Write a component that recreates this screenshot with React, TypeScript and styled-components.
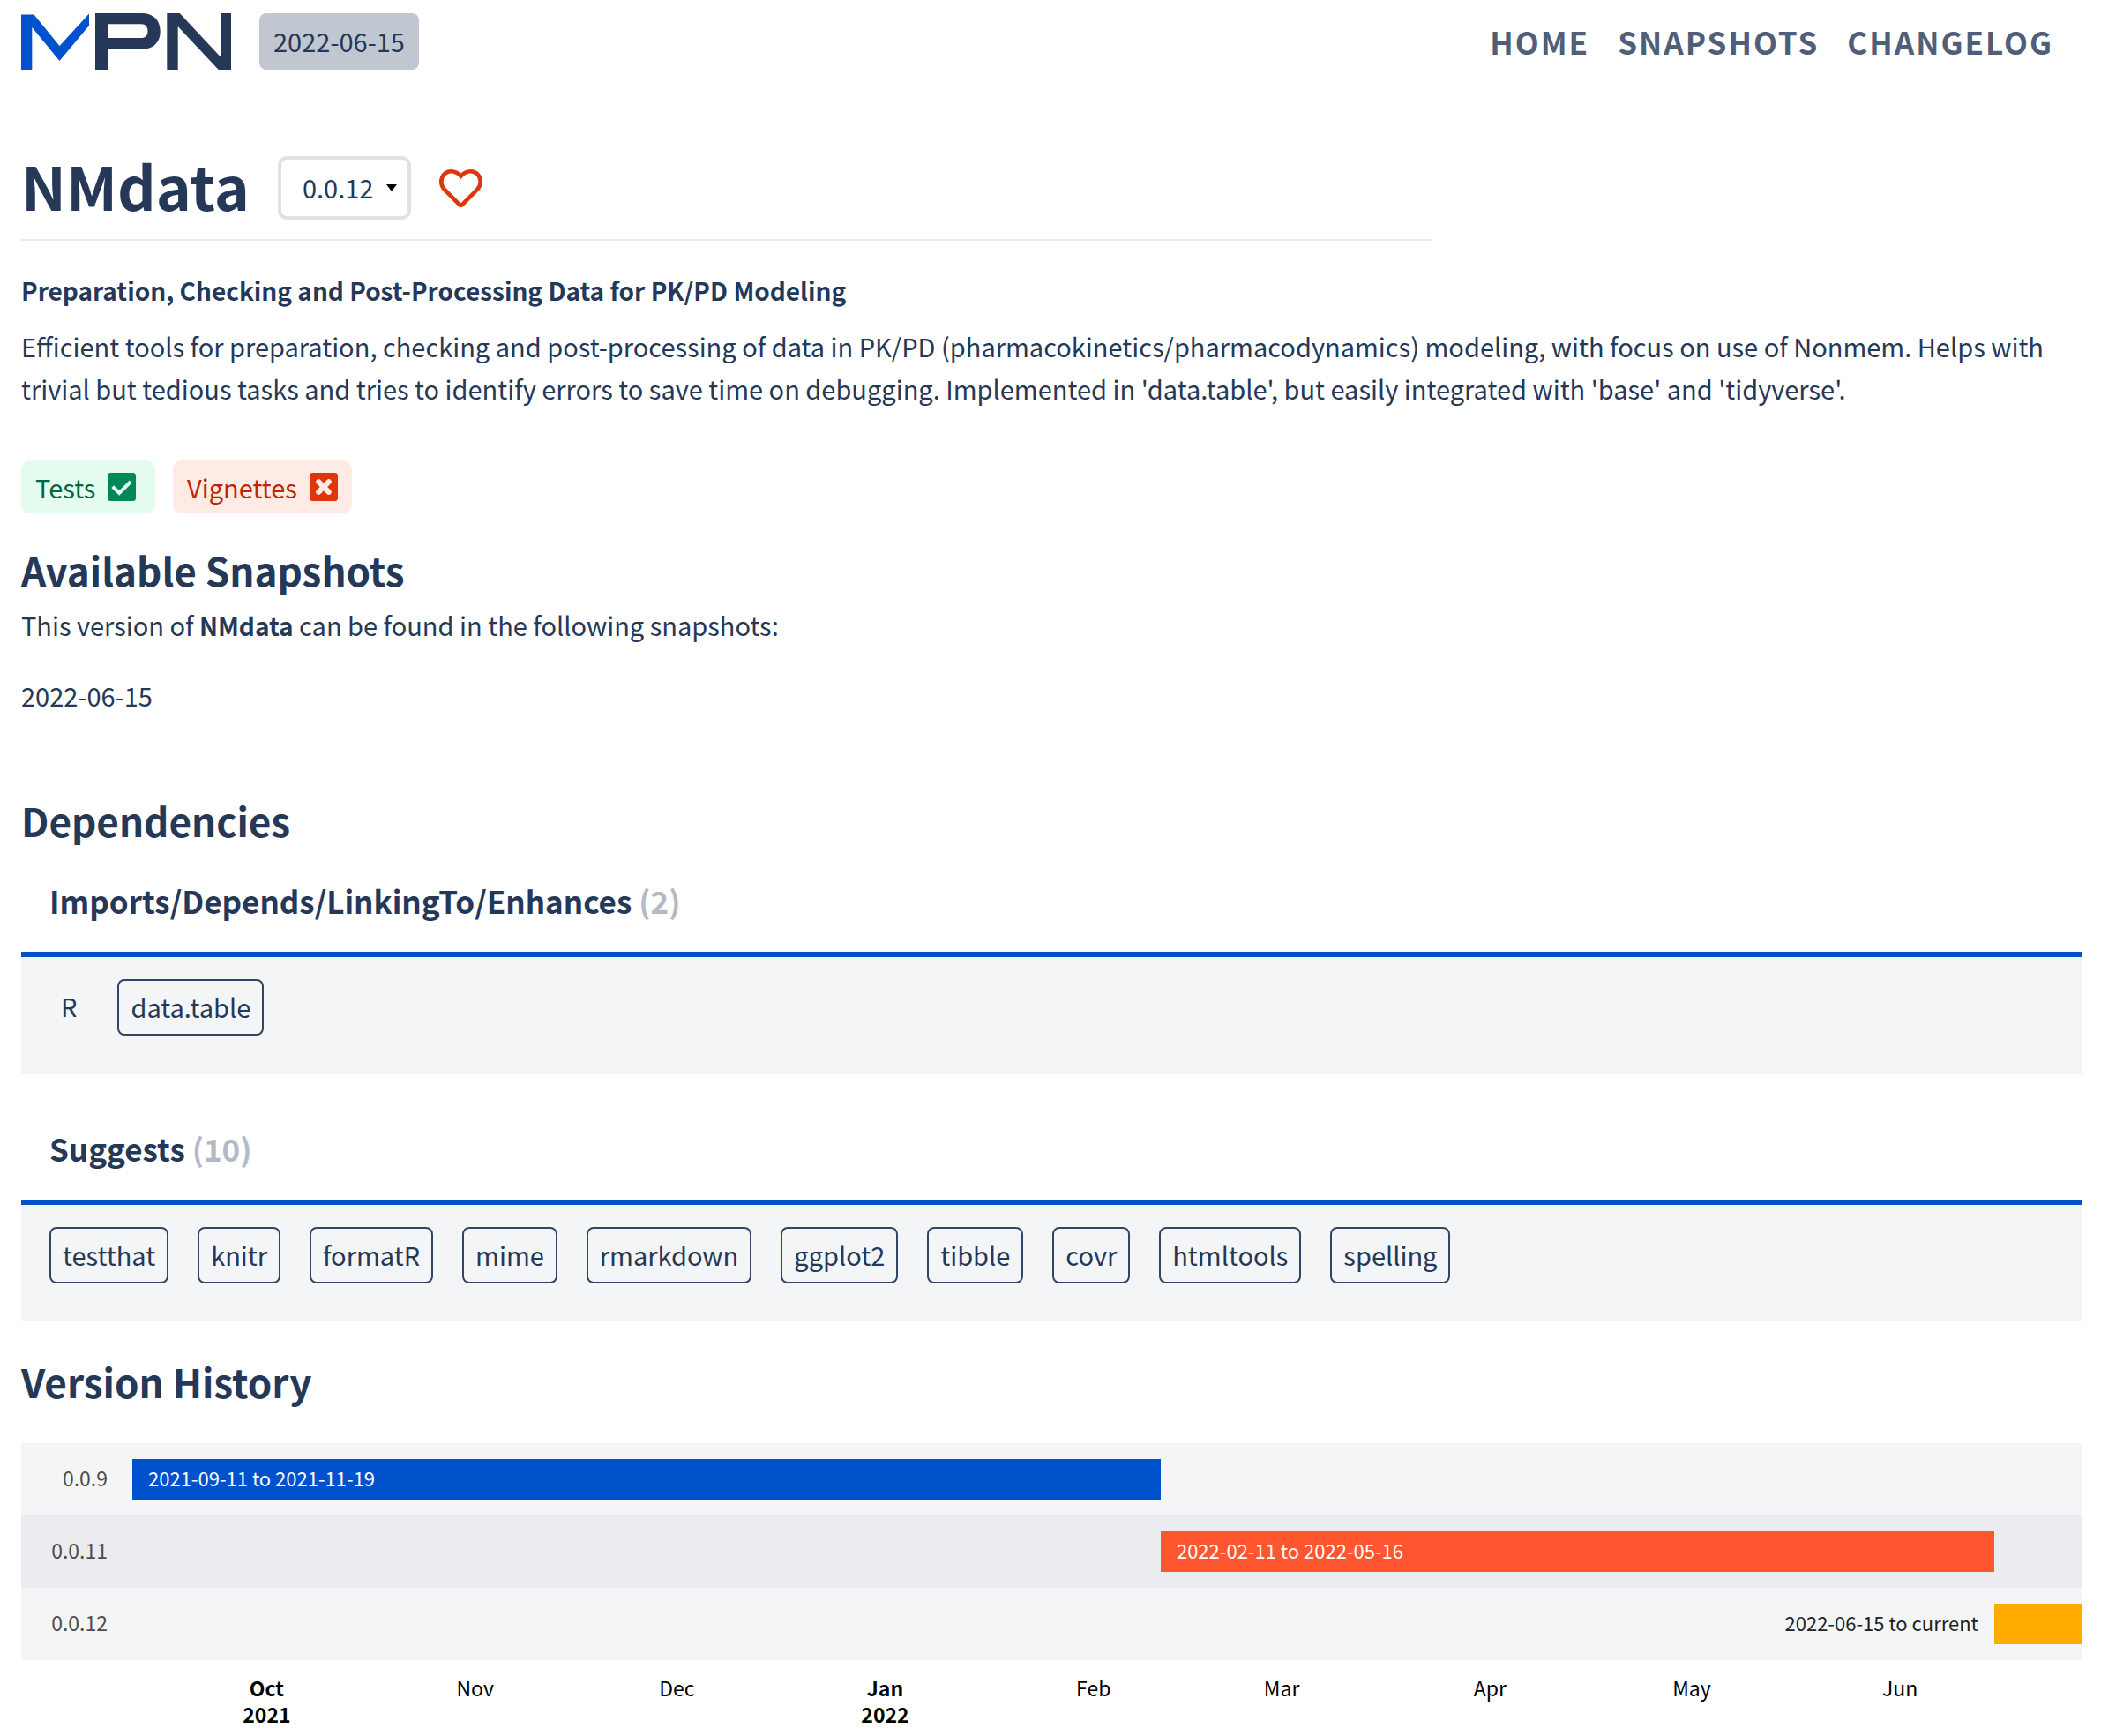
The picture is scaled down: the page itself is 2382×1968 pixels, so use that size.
import React from "react";
import styled, { createGlobalStyle } from "styled-components";

const color = {
  ink: "#253858",
  slate: "#505f79",
  blue: "#0052cc",
  panel: "#f4f5f7",
  band: "#ebecf0",
  rule: "#ebecf0",
  muted: "#b3bac5",
};

const GlobalStyle = createGlobalStyle`
  *, *::before, *::after { box-sizing: border-box; }
  body {
    margin: 0;
    background: #ffffff;
    color: ${color.ink};
    font-family: "Noto Sans CJK SC", "Noto Sans", sans-serif;
    font-size: 29px;
    line-height: 48px;
  }
  h1, h2, h3, p, ul, ol, figure { margin: 0; padding: 0; }
  ul, ol { list-style: none; }
`;

const Page = styled.div`
  padding: 15px 22px 0 24px;
`;

const Header = styled.header`
  display: flex;
  align-items: center;
  gap: 32px;
`;

const LogoLink = styled.a`
  display: flex;
`;

const SnapshotBadge = styled.span`
  padding: 7px 16px 9px;
  border-radius: 8px;
  background: #c1c7d0;
`;

const Nav = styled.nav`
  display: flex;
  gap: 32px;
  margin-left: auto;
  padding-right: 32px;
`;

const NavLink = styled.a`
  color: ${color.slate};
  font-size: 35px;
  font-weight: 700;
  letter-spacing: 2px;
  text-decoration: none;
  text-transform: uppercase;
`;

const TitleBar = styled.div`
  display: flex;
  align-items: center;
  gap: 32px;
  max-width: 1600px;
  margin-top: 80px;
  padding-bottom: 4px;
  border-bottom: 2px solid ${color.rule};
`;

const Title = styled.h1`
  padding-bottom: 6px;
  font-size: 68px;
  font-weight: 700;
  line-height: 102px;
`;

const VersionPicker = styled.label`
  display: grid;
  align-items: center;
`;

const VersionSelect = styled.select`
  grid-area: 1 / 1;
  height: 72px;
  padding: 0 38px 2px 24px;
  appearance: none;
  border: 4px solid #dfe1e6;
  border-radius: 10px;
  background: transparent;
  color: inherit;
  font: inherit;
`;

const Caret = styled.svg`
  grid-area: 1 / 1;
  justify-self: end;
  margin-right: 16px;
  pointer-events: none;
`;

const IconButton = styled.button`
  display: flex;
  padding: 0;
  border: 0;
  background: none;
  cursor: pointer;
`;

const Summary = styled.p`
  margin-top: 32px;
  font-size: 28px;
  font-weight: 700;
`;

const Description = styled.p`
  margin-top: 15px;
`;

const StatusList = styled.ul`
  display: flex;
  gap: 20px;
  margin-top: 58px;
`;

const Status = styled.li<{ $ok: boolean }>`
  display: flex;
  align-items: center;
  gap: 14px;
  min-width: 152px;
  padding: 6px 16px;
  border-radius: 10px;
  background: ${(p) => (p.$ok ? "#e3fcef" : "#ffebe6")};
  color: ${(p) => (p.$ok ? "#006644" : "#bf2600")};
`;

const Heading = styled.h2<{ $gap: number }>`
  margin-top: ${(p) => p.$gap}px;
  font-size: 44px;
  font-weight: 700;
  line-height: 60px;
`;

const Paragraph = styled.p<{ $gap: number }>`
  margin-top: ${(p) => p.$gap}px;
`;

const Strong = styled.strong`
  font-size: 28px;
  font-weight: 700;
  line-height: 28px;
`;

const DependencyGroup = styled.section<{ $gap: number }>`
  margin-top: ${(p) => p.$gap}px;
`;

const GroupTitle = styled.h3`
  padding: 0 32px 30px;
  font-size: 35px;
  font-weight: 700;
  line-height: 56px;
`;

const Count = styled.span`
  color: ${color.muted};
`;

const TagPanel = styled.ul`
  display: flex;
  flex-wrap: wrap;
  gap: 33px;
  padding: 25px 32px 43px;
  border-top: 6px solid ${color.blue};
  background: ${color.panel};
`;

const TagItem = styled.li`
  display: flex;
`;

const Tag = styled.a`
  padding: 5px 13px 7px;
  border: 2px solid #344563;
  border-radius: 8px;
  color: ${color.ink};
  text-decoration: none;
`;

const PlainTag = styled.span`
  padding: 6px 13px;
`;

const Chart = styled.figure`
  margin-top: 40px;
  font-size: 22px;
  line-height: 30px;
`;

const ChartRow = styled.li<{ $alt: boolean }>`
  display: flex;
  align-items: center;
  height: 82px;
  background: ${(p) => (p.$alt ? color.band : color.panel)};
`;

const RowLabel = styled.span`
  flex: none;
  width: 126px;
  padding: 0 28px 4px 0;
  color: #4d4d4d;
  font-size: 23px;
  text-align: right;
`;

const Track = styled.div`
  display: flex;
  flex: 1;
  align-items: center;
  min-width: 0;
`;

const Lead = styled.div`
  min-width: 0;
  padding: 0 18px 4px 0;
  color: #222222;
  text-align: right;
  white-space: nowrap;
`;

const Spacer = styled.div`
  min-width: 0;
`;

const Bar = styled.div<{ $fill: string }>`
  min-width: 0;
  height: 46px;
  background: ${(p) => p.$fill};
  color: #ffffff;
  line-height: 42px;
  white-space: nowrap;
`;

const BarText = styled.span`
  padding-left: 18px;
`;

const Axis = styled.div`
  display: flex;
  margin-left: 126px;
  padding: 16px 0 8px;
  color: #000000;
  font-size: 23px;
`;

const Tick = styled.div<{ $major: boolean }>`
  display: flex;
  justify-content: center;
  width: 0;
  font-weight: ${(p) => (p.$major ? 700 : 400)};
  text-align: center;
  white-space: nowrap;
`;

const Logo = () => (
  <svg width="238" height="64" viewBox="0 0 238 64" role="img" aria-label="MPN">
    <path fill="#0052cc" d="M0 1.5H14.5L43.5 37 77 .5V14L43.5 54 12.3 16V64H0z" />
    <path
      fill="#253858"
      fillRule="evenodd"
      d="M84 0H137C150 0 157.700 8 157.700 20.400S150 40.700 137 40.700H98V64H84zM98 12.300V28H136C141 28 143.500 25 143.500 20.200S141 12.300 136 12.300z"
    />
    <path fill="#253858" d="M165.300 0H179.700L226 49.500V0H238V64H223.700L177.700 15V64H165.300z" />
  </svg>
);

const Heart = () => (
  <svg width="49" height="43" viewBox="0 0 49 43" aria-hidden="true">
    <path
      fill="none"
      stroke="#de350b"
      strokeWidth="4.6"
      strokeLinejoin="miter"
      d="M24.500 7.600C21.500 4.300 17.500 2.300 13.500 2.300 7 2.300 2.300 7.400 2.300 14c0 3.600 1.400 6.600 3.800 9L22.700 39.900q1.800 1.500 3.600 0L42.900 23c2.400-2.400 3.800-5.400 3.800-9C46.700 7.400 42 2.300 35.500 2.300 31.500 2.300 27.500 4.300 24.500 7.600z"
    />
  </svg>
);

const CheckIcon = () => (
  <svg width="32" height="32" viewBox="0 0 32 32" role="img" aria-label="yes">
    <rect width="32" height="32" rx="3.500" fill="#00875a" />
    <path d="M5.700 15.600 13.200 22.900 26.200 10" fill="none" stroke="#e3fcef" strokeWidth="4" />
  </svg>
);

const CrossIcon = () => (
  <svg width="32" height="32" viewBox="0 0 32 32" role="img" aria-label="no">
    <rect width="32" height="32" rx="3.500" fill="#de350b" />
    <path
      d="M10.200 10.200 21.800 21.800M21.800 10.200 10.200 21.800"
      fill="none"
      stroke="#ffebe6"
      strokeWidth="6"
      strokeLinecap="round"
    />
  </svg>
);

const navItems = ["Home", "Snapshots", "Changelog"];

const statuses = [
  { label: "Tests", ok: true },
  { label: "Vignettes", ok: false },
];

const imports = [
  { name: "R", linked: false },
  { name: "data.table", linked: true },
];

const suggests = [
  "testthat",
  "knitr",
  "formatR",
  "mime",
  "rmarkdown",
  "ggplot2",
  "tibble",
  "covr",
  "htmltools",
  "spelling",
].map((name) => ({ name, linked: true }));

const DAY = 86400000;
const chartStart = "2021-09-11";
const chartEnd = "2022-06-28";
const daysBetween = (from: string, to: string) =>
  Math.round((Date.parse(to) - Date.parse(from)) / DAY);

const versions = [
  { name: "0.0.9", from: "2021-09-11", until: "2022-02-11", text: "2021-09-11 to 2021-11-19", fill: "#0052cc", outside: false },
  { name: "0.0.11", from: "2022-02-11", until: "2022-06-15", text: "2022-02-11 to 2022-05-16", fill: "#ff5630", outside: false },
  { name: "0.0.12", from: "2022-06-15", until: chartEnd, text: "2022-06-15 to current", fill: "#ffab00", outside: true },
];

const ticks = [
  { date: "2021-10-01", label: "Oct", year: "2021" },
  { date: "2021-11-01", label: "Nov" },
  { date: "2021-12-01", label: "Dec" },
  { date: "2022-01-01", label: "Jan", year: "2022" },
  { date: "2022-02-01", label: "Feb" },
  { date: "2022-03-01", label: "Mar" },
  { date: "2022-04-01", label: "Apr" },
  { date: "2022-05-01", label: "May" },
  { date: "2022-06-01", label: "Jun" },
];

const share = (days: number) => ({ flex: `${days} 1 0px` });
const portion = (days: number) => ({
  width: `${(days / daysBetween(chartStart, chartEnd)) * 100}%`,
});

type Dependency = { name: string; linked: boolean };

const Dependencies = ({ title, items, gap }: { title: string; items: Dependency[]; gap: number }) => (
  <DependencyGroup $gap={gap}>
    <GroupTitle>
      {title} <Count>({items.length})</Count>
    </GroupTitle>
    <TagPanel>
      {items.map((item) => (
        <TagItem key={item.name}>
          {item.linked ? <Tag href={`#${item.name}`}>{item.name}</Tag> : <PlainTag>{item.name}</PlainTag>}
        </TagItem>
      ))}
    </TagPanel>
  </DependencyGroup>
);

const VersionChart = () => (
  <Chart>
    <ol>
      {versions.map((v, i) => (
        <ChartRow key={v.name} $alt={i % 2 === 1}>
          <RowLabel>{v.name}</RowLabel>
          <Track>
            {v.outside ? (
              <Lead style={portion(daysBetween(chartStart, v.from))}>{v.text}</Lead>
            ) : (
              <Spacer style={portion(daysBetween(chartStart, v.from))} />
            )}
            <Bar $fill={v.fill} style={portion(daysBetween(v.from, v.until))}>
              {!v.outside && <BarText>{v.text}</BarText>}
            </Bar>
          </Track>
        </ChartRow>
      ))}
    </ol>
    <Axis>
      {ticks.map((t, i) => (
        <React.Fragment key={t.date}>
          <Spacer style={share(daysBetween(i ? ticks[i - 1].date : chartStart, t.date))} />
          <Tick $major={Boolean(t.year)}>
            <span>
              {t.label}
              {t.year && (
                <>
                  <br />
                  {t.year}
                </>
              )}
            </span>
          </Tick>
        </React.Fragment>
      ))}
      <Spacer style={share(daysBetween(ticks[ticks.length - 1].date, chartEnd))} />
    </Axis>
  </Chart>
);

export default function App() {
  return (
    <>
      <GlobalStyle />
      <Page>
        <Header>
          <LogoLink href="#home">
            <Logo />
          </LogoLink>
          <SnapshotBadge>2022-06-15</SnapshotBadge>
          <Nav>
            {navItems.map((item) => (
              <NavLink key={item} href={`#${item.toLowerCase()}`}>
                {item}
              </NavLink>
            ))}
          </Nav>
        </Header>
        <main>
          <TitleBar>
            <Title>NMdata</Title>
            <VersionPicker>
              <VersionSelect aria-label="Package version" defaultValue="0.0.12">
                <option>0.0.12</option>
              </VersionSelect>
              <Caret width="12" height="8" viewBox="0 0 12 8" aria-hidden="true">
                <path d="M0 0H12L6 8z" fill="#000000" />
              </Caret>
            </VersionPicker>
            <IconButton type="button" aria-label="Add to favourites">
              <Heart />
            </IconButton>
          </TitleBar>
          <Summary>Preparation, Checking and Post-Processing Data for PK/PD Modeling</Summary>
          <Description>
            Efficient tools for preparation, checking and post-processing of data in PK/PD
            (pharmacokinetics/pharmacodynamics) modeling, with focus on use of Nonmem. Helps with
            trivial but tedious tasks and tries to identify errors to save time on debugging.
            Implemented in 'data.table', but easily integrated with 'base' and 'tidyverse'.
          </Description>
          <StatusList>
            {statuses.map((s) => (
              <Status key={s.label} $ok={s.ok}>
                {s.label}
                {s.ok ? <CheckIcon /> : <CrossIcon />}
              </Status>
            ))}
          </StatusList>
          <Heading $gap={34}>Available Snapshots</Heading>
          <Paragraph $gap={8}>
            This version of <Strong>NMdata</Strong> can be found in the following snapshots:
          </Paragraph>
          <Paragraph $gap={32}>2022-06-15</Paragraph>
          <Heading $gap={88}>Dependencies</Heading>
          <Dependencies title="Imports/Depends/LinkingTo/Enhances" items={imports} gap={33} />
          <Dependencies title="Suggests" items={suggests} gap={57} />
          <Heading $gap={38}>Version History</Heading>
          <VersionChart />
        </main>
      </Page>
    </>
  );
}
